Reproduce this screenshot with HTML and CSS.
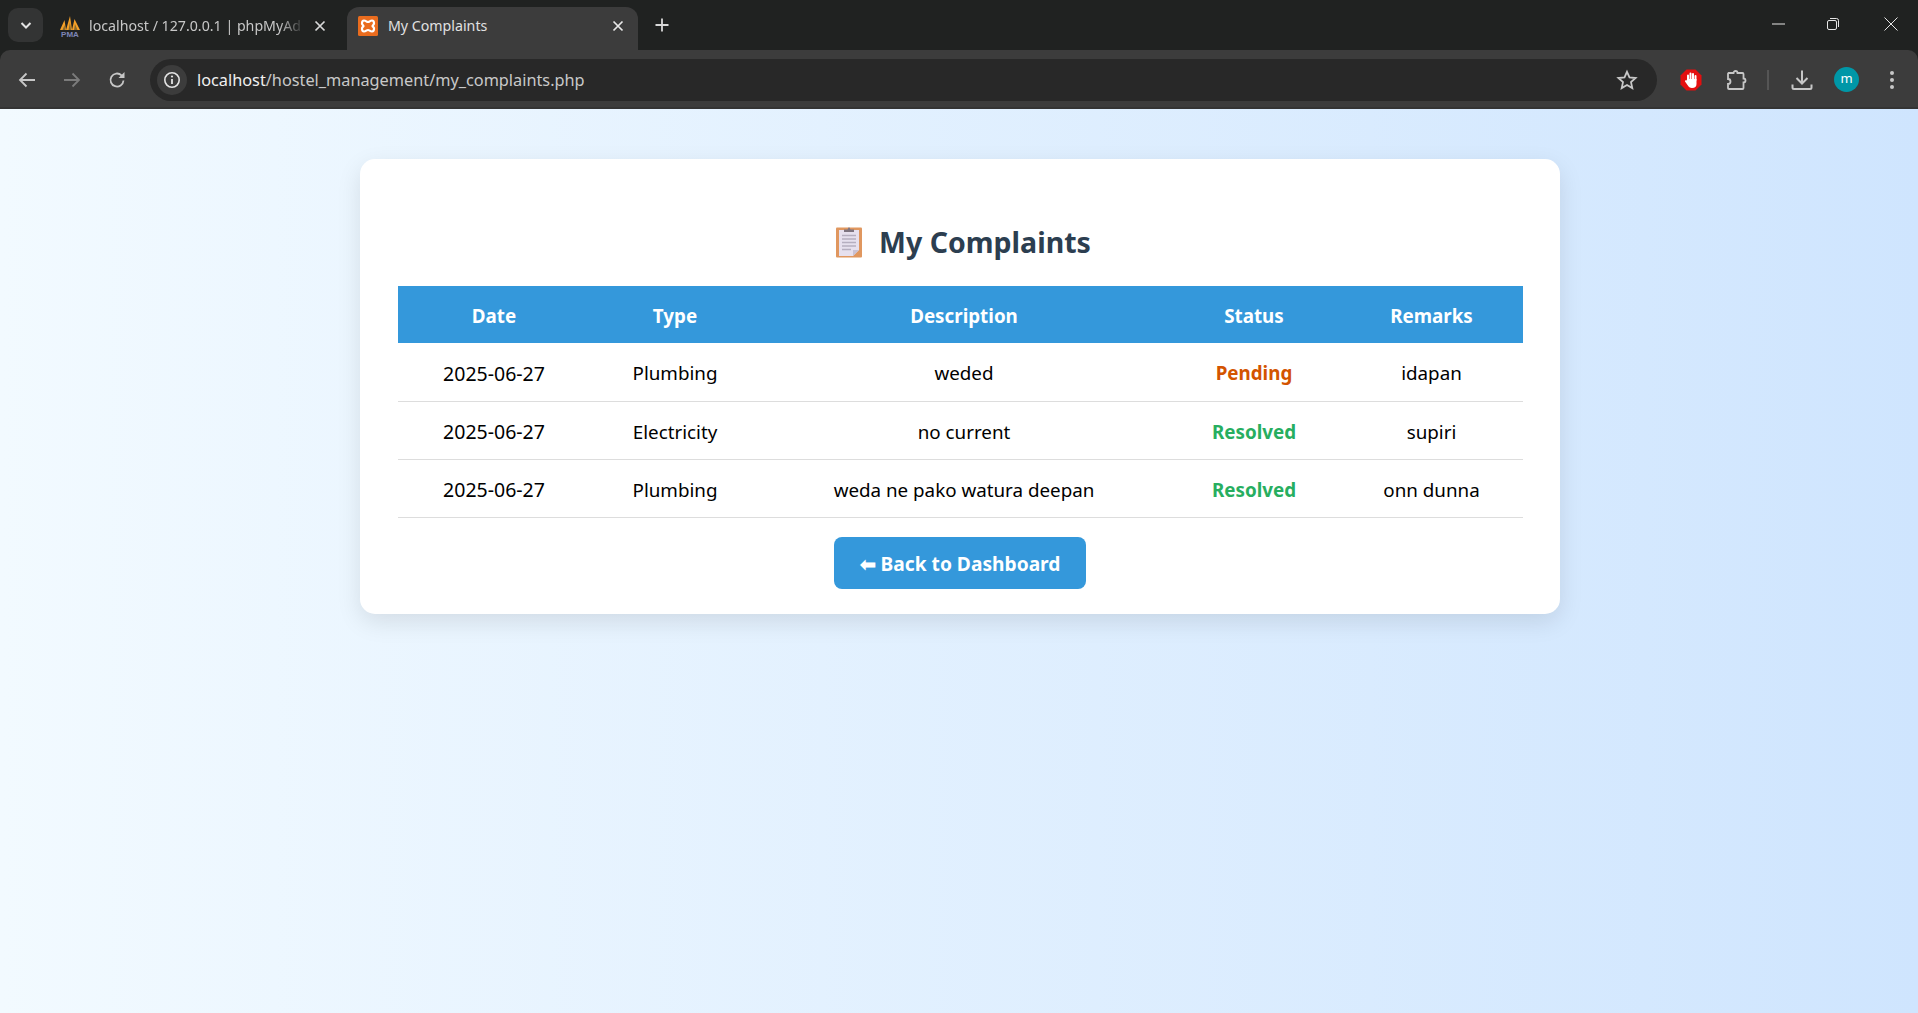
FILE: index.html
```html
<!DOCTYPE html>
<html lang="en">
<head>
    <meta charset="UTF-8">
    <meta name="viewport" content="width=device-width, initial-scale=1.0">
    <title>My Complaints</title>
    <link rel="stylesheet" href="styles.css">
</head>

<body>
    <div class="browser_chrome">
        <div class="tab_strip">
            <div class="tab_expander">
                <svg width="16" height="16" viewBox="0 0 16 16"><path d="M3.5 6l4.5 4.5L12.500 6" fill="none" stroke="#e3e3e3" stroke-width="2"/></svg>
            </div>
            <div class="tab">
                <svg class="tab_icon pma_icon" width="22" height="24" viewBox="0 0 22 24">
                    <path d="M1 16L5.500 6l1.500 10zM7 16L11 2l2 14zM13 16l2.500-11L21 16z" fill="#f5a028"/>
                    <path d="M3.500 16l2-5 .8 5zM9.500 16L11 8l1 8zM15 16l1-6 2.500 6z" fill="#8a6a2c"/>
                    <text class="pma_text" x="11" y="23" text-anchor="middle">PMA</text>
                </svg>
                <span class="tab_title faded">localhost / 127.0.0.1 | phpMyAd</span>
                <svg class="tab_close" width="14" height="14" viewBox="0 0 14 14"><path d="M2.5 2.500l9 9M11.500 2.500l-9 9" stroke="#d8d8d8" stroke-width="1.700"/></svg>
            </div>
            <div class="tab active">
                <svg class="tab_icon" width="20" height="20" viewBox="0 0 20 20">
                    <rect width="20" height="20" rx="1.500" fill="#ea6c1e"/>
                    <path d="M6 4.500c2 0 2.500 1.500 4 1.500s2-1.500 4-1.500c2 0 2 2 2 3 0 1.500-1.500 1.500-1.500 2.500s1.500 1 1.500 2.500c0 1 0 3-2 3-2 0-2.500-1.500-4-1.500s-2 1.500-4 1.500c-2 0-2-2-2-3 0-1.500 1.500-1.500 1.500-2.500S4 9 4 7.500c0-1 0-3 2-3z" fill="none" stroke="#fff" stroke-width="2.200"/>
                </svg>
                <span class="tab_title">My Complaints</span>
                <svg class="tab_close" width="14" height="14" viewBox="0 0 14 14"><path d="M2.5 2.500l9 9M11.500 2.500l-9 9" stroke="#e8e8e8" stroke-width="1.700"/></svg>
            </div>
            <div class="new_tab">
                <svg width="16" height="16" viewBox="0 0 16 16"><path d="M8 1.500v13M1.500 8h13" stroke="#d8d8d8" stroke-width="1.800"/></svg>
            </div>
            <div class="window_controls">
                <svg width="14" height="14" viewBox="0 0 14 14"><path d="M1 7h13" stroke="#e6e6e6" stroke-width="1"/></svg>
                <svg width="14" height="14" viewBox="0 0 14 14"><rect x="1.500" y="3.500" width="9" height="9" rx="1.500" fill="none" stroke="#e6e6e6"/><path d="M4 1.500h6.500a2 2 0 0 1 2 2V10" fill="none" stroke="#e6e6e6"/></svg>
                <svg class="close_window" width="14" height="14" viewBox="0 0 14 14"><path d="M.5.500l13 13M13.500.500l-13 13" stroke="#e6e6e6" stroke-width="1"/></svg>
            </div>
        </div>

        <div class="toolbar">
            <div class="tool_btn">
                <svg width="20" height="20" viewBox="0 0 20 20"><path d="M18 10H3M9.500 3.500L3 10l6.500 6.500" fill="none" stroke="#c7c7c7" stroke-width="1.800"/></svg>
            </div>
            <div class="tool_btn">
                <svg width="20" height="20" viewBox="0 0 20 20"><path d="M2 10h15M10.500 3.500L17 10l-6.500 6.500" fill="none" stroke="#7b7b7b" stroke-width="1.800"/></svg>
            </div>
            <div class="tool_btn">
                <svg width="20" height="20" viewBox="0 0 20 20"><path d="M16.500 10.500a6.500 6.500 0 1 1-2-5.200L16.500 7" fill="none" stroke="#c7c7c7" stroke-width="1.800"/><path d="M17.500 2v6h-6z" fill="#c7c7c7"/></svg>
            </div>
            <div class="address_bar">
                <div class="site_info">
                    <svg width="18" height="18" viewBox="0 0 18 18"><circle cx="9" cy="9" r="7.200" fill="none" stroke="#e3e3e3" stroke-width="1.600"/><path d="M9 8v5" stroke="#e3e3e3" stroke-width="1.800"/><circle cx="9" cy="5.500" r="1.100" fill="#e3e3e3"/></svg>
                </div>
                <div class="url"><span class="url_host">localhost</span>/hostel_management/my_complaints.php</div>
                <svg class="star" width="22" height="22" viewBox="0 0 22 22"><path d="M11 2.800l2.500 5.600 6.100.6-4.600 4.100 1.300 6-5.300-3.100-5.300 3.100 1.300-6L2.400 9l6.100-.6z" fill="none" stroke="#c7c7c7" stroke-width="1.800"/></svg>
            </div>
            <div class="tool_group">
                <div class="tool_btn">
                    <svg width="22" height="22" viewBox="0 0 22 22">
                        <path d="M6.500.5h9l6 6v9l-6 6h-9l-6-6v-9z" fill="#e40f0f"/>
                        <path d="M8 11V6.500M10.500 10V4.500M13 10V5M15.500 11V7" stroke="#fff" stroke-width="2" stroke-linecap="round"/>
                        <path d="M7 10h9.500v5c0 2.500-1.500 4-4.500 4-2 0-3.500-1-4.500-3L5 12.500c-.5-1 1-1.800 1.800-1z" fill="#fff"/>
                    </svg>
                </div>
                <div class="tool_btn">
                    <svg width="22" height="22" viewBox="0 0 22 22"><path d="M3.500 4h5a2 2 0 0 1 4 0h5a1 1 0 0 1 1 1v4.500a2 2 0 0 1 0 4V19a1 1 0 0 1-1 1H4a1 1 0 0 1-1-1v-4a2.500 2.500 0 0 0 0-5V5a1 1 0 0 1 .5-1z" fill="none" stroke="#c7c7c7" stroke-width="1.800"/></svg>
                </div>
                <div class="tool_divider"></div>
                <div class="tool_btn">
                    <svg width="22" height="22" viewBox="0 0 22 22"><path d="M11 1.500v13M5.500 9l5.500 5.500L16.500 9" fill="none" stroke="#c7c7c7" stroke-width="2"/><path d="M1.500 15.500v3a1.500 1.500 0 0 0 1.500 1.500h16a1.500 1.500 0 0 0 1.500-1.500v-3" fill="none" stroke="#c7c7c7" stroke-width="2"/></svg>
                </div>
                <div class="tool_btn">
                    <div class="avatar">m</div>
                </div>
                <div class="tool_btn">
                    <svg width="6" height="20" viewBox="0 0 6 20"><circle cx="3" cy="3" r="2" fill="#c7c7c7"/><circle cx="3" cy="10" r="2" fill="#c7c7c7"/><circle cx="3" cy="17" r="2" fill="#c7c7c7"/></svg>
                </div>
            </div>
        </div>
    </div>

    <div class="page">
        <div class="container">
            <h2 class="page_title">
                <svg class="clipboard" width="28" height="32" viewBox="0 0 28 32">
                    <rect x="1" y="1.500" width="26" height="30" rx="1" fill="#e0975f"/>
                    <path d="M4 4h20v20l-6 6H4z" fill="#e6e0ee"/>
                    <path d="M18 30l6-6h-6z" fill="#c9c1d4"/>
                    <path d="M7 9.500h14M7 13h14M7 16.500h14M7 20h14M7 23.500h9" stroke="#b5aec0" stroke-width="1.400"/>
                    <path d="M9 6V3.500h3.500L14 1l1.500 2.500H19V6z" fill="#7d7480"/>
                </svg>
                My Complaints
            </h2>

            <table class="complaints">
                <colgroup>
                    <col class="col_date">
                    <col class="col_type">
                    <col class="col_desc">
                    <col class="col_status">
                    <col class="col_remarks">
                </colgroup>
                <thead>
                    <tr>
                        <th>Date</th>
                        <th>Type</th>
                        <th>Description</th>
                        <th>Status</th>
                        <th>Remarks</th>
                    </tr>
                </thead>
                <tbody>
                    <tr>
                        <td class="date_cell">2025-06-27</td>
                        <td>Plumbing</td>
                        <td>weded</td>
                        <td class="status_pending">Pending</td>
                        <td>idapan</td>
                    </tr>
                    <tr>
                        <td class="date_cell">2025-06-27</td>
                        <td>Electricity</td>
                        <td>no current</td>
                        <td class="status_resolved">Resolved</td>
                        <td>supiri</td>
                    </tr>
                    <tr>
                        <td class="date_cell">2025-06-27</td>
                        <td>Plumbing</td>
                        <td>weda ne pako watura deepan</td>
                        <td class="status_resolved">Resolved</td>
                        <td>onn dunna</td>
                    </tr>
                </tbody>
            </table>

            <div class="back_row">
                <a class="back_btn" href="#">⬅ Back to Dashboard</a>
            </div>
        </div>
    </div>
</body>
</html>
```

FILE: styles.css
```css
*{
    box-sizing: border-box;
}

body{
    margin: 0;
    height: 1013px;
    overflow: hidden;
    display: flex;
    flex-direction: column;
    font-family: "Noto Sans", "Open Sans", sans-serif;
}

/* browser frame */
.browser_chrome{
    background-color: rgb(32, 34, 33);
    flex: none;
}

.tab_strip{
    display: flex;
    align-items: flex-end;
    height: 50px;
    padding-left: 8px;
}

.tab_expander{
    display: flex;
    align-items: center;
    justify-content: center;
    width: 35px;
    height: 34px;
    margin-bottom: 8px;
    border-radius: 10px;
    background-color: rgb(51, 52, 52);
}

.tab{
    display: flex;
    align-items: center;
    width: 295px;
    height: 43px;
    padding: 0 14px 6px 11px;
    margin-left: 5px;
    border-radius: 12px 12px 0 0;
    color: rgb(200, 200, 200);
    font-size: 14.2px;
}

.tab.active{
    background-color: rgb(60, 60, 60);
    color: rgb(225, 225, 225);
    margin-left: 4px;
    padding-left: 11px;
    padding-right: 11px;
    width: 291px;
}

.tab_icon{
    flex: none;
    margin-right: 10px;
}

.pma_icon{
    margin-right: 8px;
}

.pma_text{
    fill: #7d86b8;
    font-size: 8px;
    font-weight: 700;
    font-family: "Liberation Sans", sans-serif;
}

.tab_title{
    flex: 1;
    white-space: nowrap;
}

.tab_title.faded{
    -webkit-mask-image: linear-gradient(to right, black 88%, transparent 100%);
    mask-image: linear-gradient(to right, black 88%, transparent 100%);
}

.tab_close{
    flex: none;
    margin: 0 2px 0 8px;
}

.new_tab{
    display: flex;
    align-items: center;
    justify-content: center;
    width: 34px;
    height: 34px;
    margin: 0 0 8px 7px;
}

.window_controls{
    display: flex;
    gap: 41px;
    margin-left: auto;
    padding: 0 20px 19px 0;
}

.close_window{
    margin-left: 3px;
}

.toolbar{
    display: flex;
    align-items: center;
    height: 59px;
    padding: 2px 4px 0 4px;
    border-radius: 10px 10px 0 0;
    background-color: rgb(60, 60, 60);
    border-bottom: 2px solid rgb(52, 52, 52);
}

.tool_btn{
    display: flex;
    align-items: center;
    justify-content: center;
    width: 45px;
    height: 40px;
    flex: none;
}

.address_bar{
    display: flex;
    align-items: center;
    width: 1507px;
    height: 42px;
    margin-left: 11px;
    padding: 0 19px 0 7px;
    border-radius: 21px;
    background-color: rgb(40, 40, 40);
    color: rgb(200, 200, 200);
    font-size: 16.3px;
}

.site_info{
    display: flex;
    align-items: center;
    justify-content: center;
    width: 30px;
    height: 30px;
    border-radius: 50%;
    background-color: rgb(60, 60, 60);
    margin-right: 10px;
}

.url{
    flex: 1;
    white-space: nowrap;
}

.url_host{
    color: rgb(240, 240, 240);
}

.tool_group{
    display: flex;
    align-items: center;
    margin-left: 11px;
}

.tool_divider{
    width: 2px;
    height: 20px;
    margin: 0 10px 0 9px;
    background-color: rgb(85, 85, 85);
}

.avatar{
    width: 25px;
    height: 25px;
    border-radius: 50%;
    background-color: rgb(0, 151, 167);
    color: white;
    font-size: 13px;
    line-height: 23px;
    text-align: center;
}

/* page */
.page{
    flex: 1;
    padding-top: 50px;
    background: linear-gradient(to right, #f2faff, #cfe5fe);
}

.container{
    width: 1200px;
    margin-left: 360px;
    padding: 61px 37px 25px 38px;
    border-radius: 15px;
    background-color: white;
    box-shadow: 0 8px 25px rgba(0, 0, 0, 0.1);
}

.page_title{
    display: flex;
    align-items: center;
    justify-content: center;
    height: 44px;
    margin: 0 0 22px;
    padding-left: 5px;
    color: #2c3e50;
    font-size: 28.5px;
    font-weight: 700;
}

.clipboard{
    margin-right: 16px;
}

.complaints{
    width: 100%;
    border-collapse: collapse;
    table-layout: fixed;
    font-size: 18.8px;
}

.col_date{ width: 192px; }
.col_type{ width: 170px; }
.col_desc{ width: 408px; }
.col_status{ width: 172px; }
.col_remarks{ width: 183px; }

.complaints th{
    height: 57px;
    background-color: #3498db;
    color: white;
    font-weight: 700;
    text-align: center;
    padding: 2px 0 0;
}

.complaints td{
    height: 58px;
    border-bottom: 1px solid #ddd;
    color: black;
    text-align: center;
    padding: 3px 0 0;
}

.complaints td.date_cell{
    font-size: 19.5px;
}

.complaints td.status_pending{
    color: #d35400;
    font-weight: 700;
}

.complaints td.status_resolved{
    color: #27ae60;
    font-weight: 700;
}

.back_row{
    padding: 19px 0 0 436px;
}

.back_btn{
    display: inline-block;
    width: 252px;
    height: 52px;
    border-radius: 8px;
    background-color: #3498db;
    color: white;
    font-size: 19.2px;
    font-weight: 700;
    line-height: 54px;
    text-align: center;
    text-decoration: none;
}
```
